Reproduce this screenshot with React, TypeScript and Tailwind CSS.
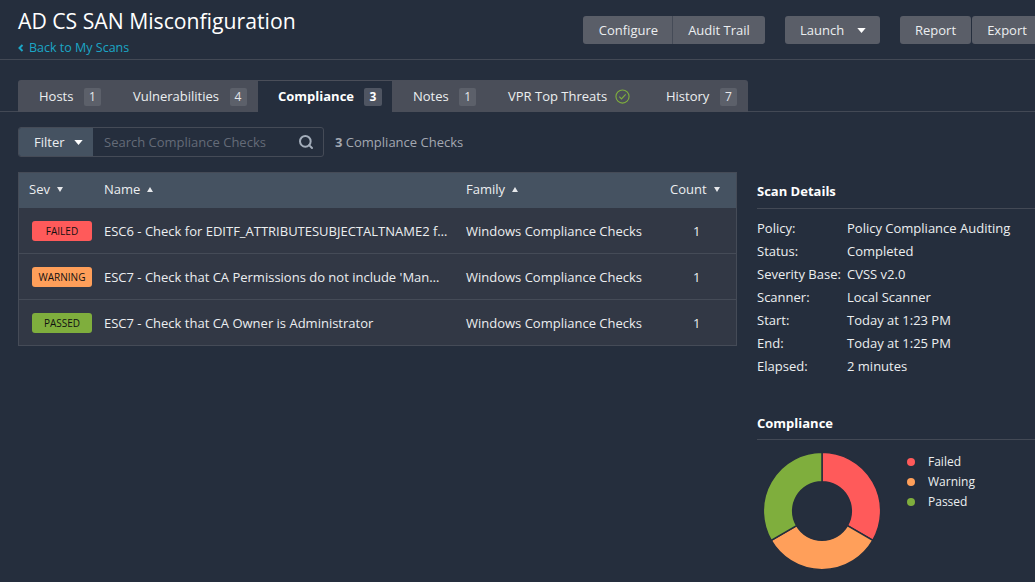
import { Search } from "lucide-react";

const font = "font-['Open_Sans',sans-serif]";

function Caret({ className }: { className?: string }) {
  return (
    <svg viewBox="0 0 10 6" className={className} fill="currentColor">
      <path d="M0 0h10L5 6z" />
    </svg>
  );
}

function SortMark({ up }: { up?: boolean }) {
  return (
    <svg viewBox="0 0 6 5" className="ml-[7px] h-[5px] w-[6px] text-[#e6e8eb]" fill="currentColor">
      <path d={up ? "M3 0l3 5H0z" : "M0 0h6L3 5z"} />
    </svg>
  );
}

function TabBadge({ n, active }: { n: number; active?: boolean }) {
  return (
    <span
      className={`flex h-[18px] items-center justify-center rounded-[2px] text-[12px] ${
        active ? "ml-[10px] w-[18px] bg-[#4f5562] font-bold text-white" : "ml-[10.5px] w-[17px] bg-[#5c606a] text-[#e6e8eb]"
      }`}
    >
      {n}
    </span>
  );
}

function Tabs() {
  return (
    <div className="mt-[20px] flex h-[32px] border-b border-[#434955] pl-[18px]">
      <div className="flex h-[32px] overflow-hidden rounded-t-[3px] bg-[#4a4e59] text-[13px] text-[#eceef0]">
        <div className="flex w-[94px] items-center pt-[1px] pl-[21px]">
          <span>Hosts</span>
          <TabBadge n={1} />
        </div>
        <div className="flex w-[146px] items-center pt-[1px] pl-[21px]">
          <span>Vulnerabilities</span>
          <TabBadge n={4} />
        </div>
        <div className="flex w-[134px] items-center border-t border-[#4a4e59] bg-[#252e3d] pl-[20px] font-bold text-white">
          <span>Compliance</span>
          <TabBadge n={3} active />
        </div>
        <div className="flex w-[94px] items-center pt-[1px] pl-[21px]">
          <span>Notes</span>
          <TabBadge n={1} />
        </div>
        <div className="flex w-[158px] items-center pt-[1px] pl-[22px]">
          <span>VPR Top Threats</span>
          <svg viewBox="0 0 16 16" className="ml-[8px] h-[15px] w-[15px]" fill="none" stroke="#7fae3d" strokeWidth="1.2">
            <circle cx="8" cy="8" r="7" />
            <path d="M4.6 8.2l2.3 2.3 4.5-4.7" />
          </svg>
        </div>
        <div className="flex w-[104px] items-center pt-[1px] pl-[22px]">
          <span>History</span>
          <TabBadge n={7} />
        </div>
      </div>
    </div>
  );
}

const rows = [
  {
    sev: "FAILED",
    color: "bg-[#ff5a5a]",
    name: "ESC6 - Check for EDITF_ATTRIBUTESUBJECTALTNAME2 for the Certificate Authority",
    cut: "pr-[18.5px]",
  },
  {
    sev: "WARNING",
    color: "bg-[#ff9f5a]",
    name: "ESC7 - Check that CA Permissions do not include 'ManageCA' rights for low privileged users",
    cut: "pr-[22px]",
  },
  { sev: "PASSED", color: "bg-[#7fae3d]", name: "ESC7 - Check that CA Owner is Administrator", cut: "pr-[18.5px]" },
];

function ChecksTable() {
  return (
    <div className="w-[719px] self-start border border-[#454b57] bg-[#323845] text-[13px] text-[#eceef0]">
      <div className="flex h-[35px] items-center bg-[#455261] pb-[2px]">
        <div className="flex w-[85px] items-center pl-[10px]">
          Sev
          <SortMark />
        </div>
        <div className="flex w-[362px] items-center">
          Name
          <SortMark up />
        </div>
        <div className="flex w-[204px] items-center">
          Family
          <SortMark up />
        </div>
        <div className="flex items-center">
          Count
          <SortMark />
        </div>
      </div>
      {rows.map((r, i) => (
        <div
          key={r.sev}
          className={`flex items-center pt-[1px] ${i < 2 ? "h-[46px] border-b border-[#454b57]" : "h-[45px]"}`}
        >
          <div className="w-[85px] pl-[13px]">
            <div className={`flex h-[20px] w-[60px] items-center justify-center rounded-[3px] text-[10px] text-[#111111] ${r.color}`}>
              {r.sev}
            </div>
          </div>
          <div className={`w-[362px] truncate pt-[2px] ${r.cut}`}>{r.name}</div>
          <div className="w-[204px] pt-[2px]">Windows Compliance Checks</div>
          <div className="w-[56px] pt-[2px] pl-[23px]">1</div>
        </div>
      ))}
    </div>
  );
}

const details = [
  ["Policy:", "Policy Compliance Auditing"],
  ["Status:", "Completed"],
  ["Severity Base:", "CVSS v2.0"],
  ["Scanner:", "Local Scanner"],
  ["Start:", "Today at 1:23 PM"],
  ["End:", "Today at 1:25 PM"],
  ["Elapsed:", "2 minutes"],
];

function Donut() {
  return (
    <svg viewBox="0 0 120 120" className="h-[120px] w-[120px] shrink-0">
      <g stroke="#252e3d" strokeWidth="1.5">
        <path fill="#ff5a5a" d="M60 1.3A58.7 58.7 0 0 1 110.8 89.35L85.4 74.65A29.3 29.3 0 0 0 60 30.7z" />
        <path fill="#ff9f5a" d="M110.8 89.35A58.7 58.7 0 0 1 9.2 89.35L34.6 74.65A29.3 29.3 0 0 0 85.4 74.65z" />
        <path fill="#7fae3d" d="M9.2 89.35A58.7 58.7 0 0 1 60 1.3V30.7A29.3 29.3 0 0 0 34.6 74.65z" />
      </g>
    </svg>
  );
}

function SidePanel() {
  return (
    <div className="mt-[9px] ml-[20px] w-[278px] shrink-0 text-[13px] text-[#eceef0]">
      <h3 className="border-b border-[#434955] pt-[1px] pb-[7px] text-[13px] leading-[19px] font-bold text-white">Scan Details</h3>
      <div className="mt-[8px] flex flex-col">
        {details.map(([k, v]) => (
          <div key={k} className="flex h-[23px] items-center">
            <span className="w-[90px]">{k}</span>
            <span>{v}</span>
          </div>
        ))}
      </div>
      <h3 className="mt-[35px] border-b border-[#434955] pt-[1px] pb-[6px] text-[13px] leading-[19px] font-bold text-white">Compliance</h3>
      <div className="mt-[11px] flex">
        <div className="ml-[5px]">
          <Donut />
        </div>
        <div className="ml-[25px] flex flex-col pt-[1px] text-[12px]">
          {[
            ["Failed", "bg-[#ff5a5a]"],
            ["Warning", "bg-[#ff9f5a]"],
            ["Passed", "bg-[#7fae3d]"],
          ].map(([label, c]) => (
            <div key={label} className="flex h-[20px] items-center">
              <span className={`h-[8px] w-[8px] rounded-full ${c}`} />
              <span className="ml-[13px]">{label}</span>
            </div>
          ))}
        </div>
      </div>
    </div>
  );
}

export default function App() {
  return (
    <div className={`h-[582px] w-[1035px] overflow-hidden bg-[#252e3d] ${font}`}>
      {/* Header */}
      <header className="flex h-[60px] border-b border-[#434955] pl-[18px]">
        <div className="w-[565px] shrink-0">
          <h1 className="mt-[6px] text-[21.2px] leading-[30px] text-white">AD CS SAN Misconfiguration</h1>
          <a className="mt-[3px] flex items-center text-[12.5px] leading-[18px] text-[#1ba6c6]">
            <svg viewBox="0 0 6 8" className="mr-[5px] h-[8px] w-[6px]" fill="none" stroke="currentColor" strokeWidth="2">
              <path d="M4.5 1L1.5 4l3 3" />
            </svg>
            Back to My Scans
          </a>
        </div>
        <div className="mt-[16px] flex h-[28px] text-[13px] text-[#eceef0]">
          <button className="w-[90px] rounded-l-[3px] border-r border-[#454b57] bg-[#5a5e68] pt-[1px] pl-[2px]">Configure</button>
          <button className="w-[92px] rounded-r-[3px] bg-[#5a5e68] pt-[1px]">Audit Trail</button>
          <button className="ml-[20px] flex w-[95px] items-center rounded-[3px] bg-[#5a5e68] pt-[1px] pl-[15px]">
            Launch
            <Caret className="ml-[13px] h-[5px] w-[9px] text-white" />
          </button>
          <button className="ml-[20px] w-[71px] rounded-[3px] bg-[#5a5e68] pt-[1px]">Report</button>
          <button className="ml-[1px] w-[70px] shrink-0 rounded-[3px] bg-[#5a5e68] pt-[1px]">Export</button>
        </div>
      </header>

      <Tabs />

      {/* Filter */}
      <div className="mt-[15px] flex items-center pl-[18px]">
        <div className="flex h-[30px] w-[306px] overflow-hidden rounded-[3px] border border-[#454b57]">
          <div className="flex w-[74px] items-center bg-[#455261] pt-[1px] pl-[15px] text-[13px] text-[#eceef0]">
            Filter
            <Caret className="ml-[9px] h-[5px] w-[9px] text-white" />
          </div>
          <div className="flex flex-1 items-center pt-[1px] pr-[9px] pl-[11px] text-[13px] text-[#646b78]">
            <span className="flex-1">Search Compliance Checks</span>
            <Search size={16} strokeWidth={3} className="-mt-[1px] text-[#a3adba]" />
          </div>
        </div>
        <div className="ml-[11px] pt-[1px] text-[13px] text-[#a3a8b1]">
          <b>3</b> Compliance Checks
        </div>
      </div>

      {/* Main content */}
      <div className="mt-[15px] flex pl-[18px]">
        <ChecksTable />
        <SidePanel />
      </div>
    </div>
  );
}
